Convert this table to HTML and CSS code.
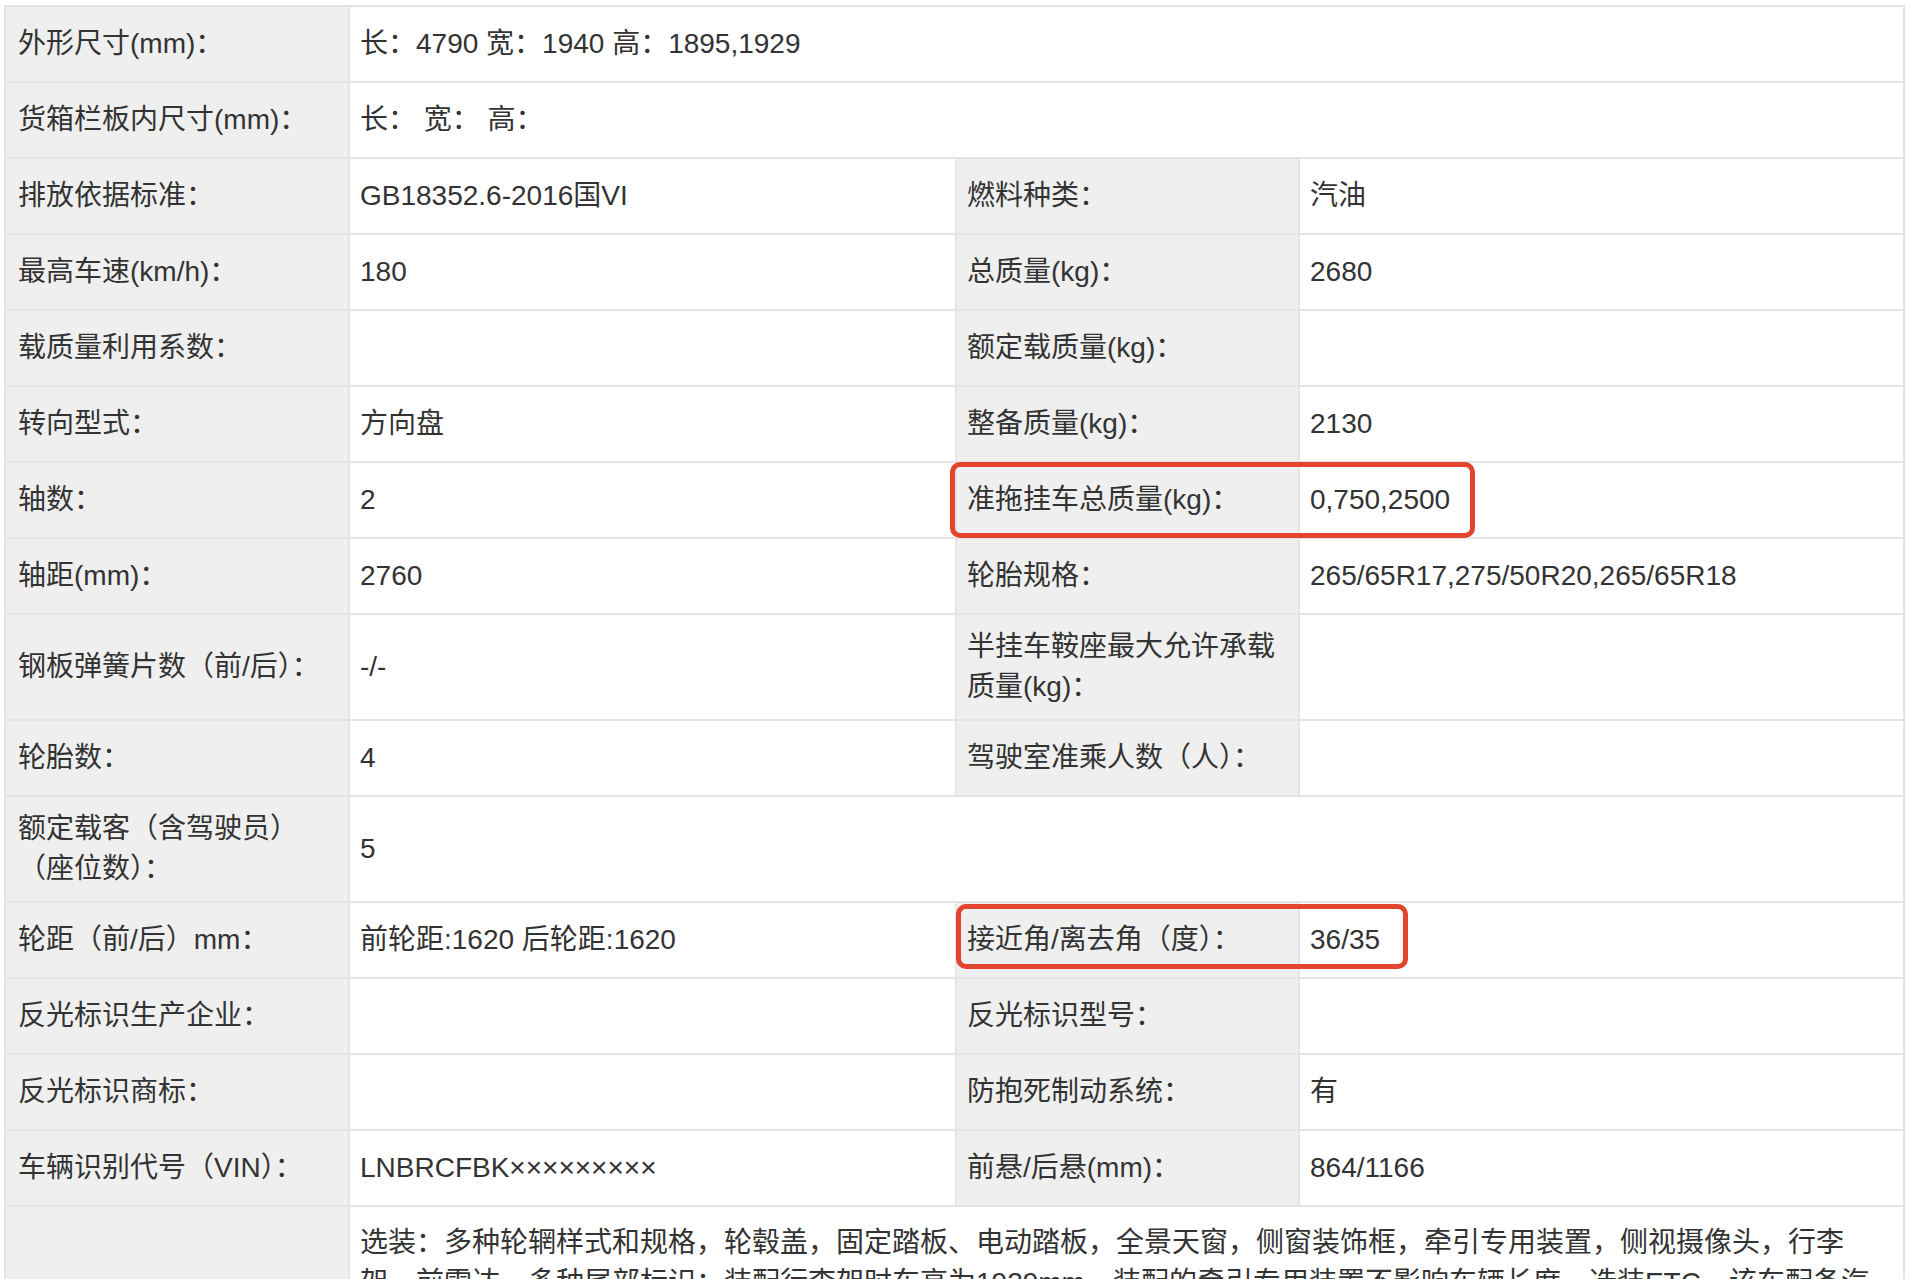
FILE: index.html
```html
<!DOCTYPE html>
<html lang="zh-CN">
<head>
    <meta charset="UTF-8">
    <meta name="viewport" content="width=device-width, initial-scale=1.0">
    <title>车辆参数</title>
    <link rel="stylesheet" href="styles.css">
</head>
<body>

<div class="spec-wrap">
    <div class="spec-table">
        <div class="cell label">外形尺寸(mm)：</div>
        <div class="cell value span-3">长：4790 宽：1940 高：1895,1929</div>

        <div class="cell label">货箱栏板内尺寸(mm)：</div>
        <div class="cell value span-3">长： 宽： 高：</div>

        <div class="cell label">排放依据标准：</div>
        <div class="cell value">GB18352.6-2016国VI</div>
        <div class="cell label mid">燃料种类：</div>
        <div class="cell value">汽油</div>

        <div class="cell label">最高车速(km/h)：</div>
        <div class="cell value">180</div>
        <div class="cell label mid">总质量(kg)：</div>
        <div class="cell value">2680</div>

        <div class="cell label">载质量利用系数：</div>
        <div class="cell value"></div>
        <div class="cell label mid">额定载质量(kg)：</div>
        <div class="cell value"></div>

        <div class="cell label">转向型式：</div>
        <div class="cell value">方向盘</div>
        <div class="cell label mid">整备质量(kg)：</div>
        <div class="cell value">2130</div>

        <div class="cell label">轴数：</div>
        <div class="cell value">2</div>
        <div class="cell label mid">准拖挂车总质量(kg)：<span class="mark mark-tow"></span></div>
        <div class="cell value">0,750,2500</div>

        <div class="cell label">轴距(mm)：</div>
        <div class="cell value">2760</div>
        <div class="cell label mid">轮胎规格：</div>
        <div class="cell value">265/65R17,275/50R20,265/65R18</div>

        <div class="cell label">钢板弹簧片数（前/后）：</div>
        <div class="cell value">-/-</div>
        <div class="cell label mid">半挂车鞍座最大允许承载质量(kg)：</div>
        <div class="cell value"></div>

        <div class="cell label">轮胎数：</div>
        <div class="cell value">4</div>
        <div class="cell label mid">驾驶室准乘人数（人）：</div>
        <div class="cell value"></div>

        <div class="cell label">额定载客（含驾驶员）（座位数）：</div>
        <div class="cell value span-3">5</div>

        <div class="cell label">轮距（前/后）mm：</div>
        <div class="cell value">前轮距:1620 后轮距:1620</div>
        <div class="cell label mid">接近角/离去角（度）：<span class="mark mark-angle"></span></div>
        <div class="cell value">36/35</div>

        <div class="cell label">反光标识生产企业：</div>
        <div class="cell value"></div>
        <div class="cell label mid">反光标识型号：</div>
        <div class="cell value"></div>

        <div class="cell label">反光标识商标：</div>
        <div class="cell value"></div>
        <div class="cell label mid">防抱死制动系统：</div>
        <div class="cell value">有</div>

        <div class="cell label">车辆识别代号（VIN）：</div>
        <div class="cell value">LNBRCFBK×××××××××</div>
        <div class="cell label mid">前悬/后悬(mm)：</div>
        <div class="cell value">864/1166</div>

        <div class="cell label"></div>
        <div class="cell value span-3 note">选装：多种轮辋样式和规格，轮毂盖，固定踏板、电动踏板，全景天窗，侧窗装饰框，牵引专用装置，侧视摄像头，行李架，前雷达，多种尾部标识；装配行李架时车高为1929mm，装配的牵引专用装置不影响车辆长度，选装ETC，该车配备汽</div>
    </div>
</div>

</body>
</html>
```

FILE: styles.css
```css
body {
    margin: 0;
    background-color: #fff;
    font-family: "Liberation Sans", "Noto Sans CJK SC", sans-serif;
    color: #333;
}
.spec-wrap {
    padding: 5px 5px 0 4px;
}
.spec-table {
    display: grid;
    grid-template-columns: 342px 605px 341px 603px;
    gap: 2px;
    padding: 2px;
    background-color: #e4e4e4;
}
.cell {
    position: relative;
    display: flex;
    align-items: center;
    min-height: 74px;
    box-sizing: border-box;
    padding: 12px;
    font-size: 28px;
    line-height: 40px;
}
.label {
    background-color: #efefef;
}
.label.mid {
    padding-left: 10px;
}
.value {
    background-color: #fff;
    padding-left: 10px;
}
.span-3 {
    grid-column: span 3;
}
.note {
    align-items: flex-start;
    padding-top: 16px;
    min-height: 200px;
}
.mark {
    position: absolute;
    z-index: 1;
    box-sizing: border-box;
    border: 5px solid #e2442d;
    border-radius: 10px;
    pointer-events: none;
}
.mark-tow {
    left: -7px;
    top: -1px;
    width: 525px;
    height: 76px;
}
.mark-angle {
    left: -1px;
    top: 1px;
    width: 452px;
    height: 65px;
}
```
